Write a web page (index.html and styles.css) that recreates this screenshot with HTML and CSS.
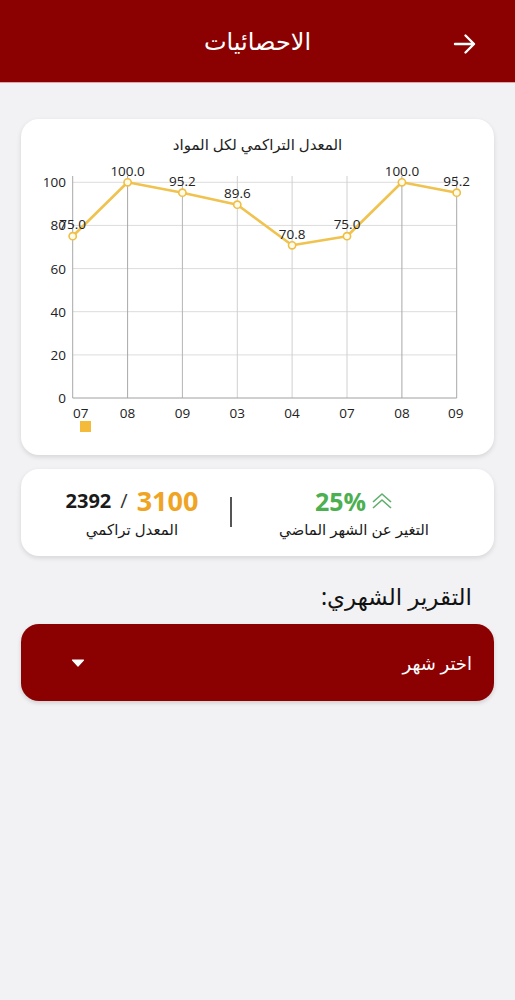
FILE: index.html
```html
<!DOCTYPE html>
<html lang="ar">
<head>
<meta charset="utf-8">
<title>الاحصائيات</title>
<link rel="stylesheet" href="styles.css">
</head>
<body>
<header class="topbar">
  <h1 class="topbar-title">الاحصائيات</h1>
  <svg class="back" width="24" height="22" viewBox="0 0 24 22"><path d="M2 11H21M12.5 2.5L21 11L12.5 19.5" fill="none" stroke="#fff" stroke-width="2.4" stroke-linecap="round" stroke-linejoin="round"/></svg>
</header>

<main class="content">
  <section class="card chart-card">
    <div class="chart-title">المعدل التراكمي لكل المواد</div>
    <svg class="chart" width="473" height="290" viewBox="0 0 473 290">
      <g stroke="#dcdcdc" stroke-width="1">
        <line x1="52.7" y1="29.3" x2="436.7" y2="29.3"/>
        <line x1="52.7" y1="72.4" x2="436.7" y2="72.4"/>
        <line x1="52.7" y1="115.6" x2="436.7" y2="115.6"/>
        <line x1="52.7" y1="158.7" x2="436.7" y2="158.7"/>
        <line x1="52.7" y1="201.9" x2="436.7" y2="201.9"/>
      </g>
      <g stroke-width="1">
        <line x1="52.7" y1="23" x2="52.7" y2="245" stroke="#a8a8a8"/>
        <line x1="107.6" y1="23" x2="107.6" y2="245" stroke="#a8a8a8"/>
        <line x1="162.4" y1="23" x2="162.4" y2="245" stroke="#b4b4b4"/>
        <line x1="217.3" y1="23" x2="217.3" y2="245" stroke="#d0d0d0"/>
        <line x1="272.1" y1="23" x2="272.1" y2="245" stroke="#d0d0d0"/>
        <line x1="327" y1="23" x2="327" y2="245" stroke="#d0d0d0"/>
        <line x1="381.9" y1="23" x2="381.9" y2="245" stroke="#a8a8a8"/>
        <line x1="436.7" y1="23" x2="436.7" y2="245" stroke="#a8a8a8"/>
      </g>
      <line x1="52.7" y1="245" x2="436.7" y2="245" stroke="#a0a0a0" stroke-width="1"/>
      <g class="ylab" text-anchor="end">
        <text x="46" y="29.3">100</text>
        <text x="46" y="72.4">80</text>
        <text x="46" y="115.6">60</text>
        <text x="46" y="158.7">40</text>
        <text x="46" y="201.9">20</text>
        <text x="46" y="245">0</text>
      </g>
      <g class="xlab" text-anchor="middle">
        <text x="53" y="259.5" text-anchor="start">07</text>
        <text x="107.6" y="259.5">08</text>
        <text x="162.4" y="259.5">09</text>
        <text x="217.3" y="259.5">03</text>
        <text x="272.1" y="259.5">04</text>
        <text x="327" y="259.5">07</text>
        <text x="381.9" y="259.5">08</text>
        <text x="435.7" y="259.5">09</text>
      </g>
      <polyline points="52.7,83.2 107.6,29.3 162.4,39.7 217.3,51.7 272.1,92.3 327,83.2 381.9,29.3 436.7,39.7" fill="none" stroke="#f0c24e" stroke-width="2.6" stroke-linejoin="round"/>
      <g fill="#fffbea" stroke="#efbf45" stroke-width="1.6">
        <circle cx="52.7" cy="83.2" r="3.6"/>
        <circle cx="107.6" cy="29.3" r="3.6"/>
        <circle cx="162.4" cy="39.7" r="3.6"/>
        <circle cx="217.3" cy="51.7" r="3.6"/>
        <circle cx="272.1" cy="92.3" r="3.6"/>
        <circle cx="327" cy="83.2" r="3.6"/>
        <circle cx="381.9" cy="29.3" r="3.6"/>
        <circle cx="436.7" cy="39.7" r="3.6"/>
      </g>
      <g class="dlab" text-anchor="middle">
        <text x="52.7" y="75.5">75.0</text>
        <text x="107.6" y="22.5">100.0</text>
        <text x="162.4" y="32.5">95.2</text>
        <text x="217.3" y="44.5">89.6</text>
        <text x="272.1" y="85.5">70.8</text>
        <text x="327" y="76">75.0</text>
        <text x="381.9" y="22.5">100.0</text>
        <text x="436.7" y="32.5">95.2</text>
      </g>
      <rect x="60" y="268" width="11" height="11" fill="#f4bb3a"/>
    </svg>
  </section>

  <section class="card stats-card">
    <div class="stat stat-total">
      <div class="stat-value"><span class="num-dark">2392</span><span class="slash">/</span><span class="num-orange">3100</span></div>
      <div class="stat-label">المعدل تراكمي</div>
    </div>
    <div class="divider"></div>
    <div class="stat stat-change">
      <div class="stat-value"><span class="num-green">25%</span><svg class="chev" width="22" height="18" viewBox="0 0 22 18"><path d="M2 10L11 2L20 10M2 16L11 8L20 16" fill="none" stroke="#5fae6a" stroke-width="1.6" stroke-linejoin="round"/></svg></div>
      <div class="stat-label">التغير عن الشهر الماضي</div>
    </div>
  </section>

  <h2 class="section-title">التقرير الشهري:</h2>

  <div class="select">
    <span class="select-text">اختر شهر</span>
    <svg class="caret" width="14" height="8" viewBox="0 0 14 8"><path d="M1.5 1H12.5L7 7Z" fill="#fff" stroke="#fff" stroke-width="1.2" stroke-linejoin="round"/></svg>
  </div>
</main>
</body>
</html>
```

FILE: styles.css
```css
* { box-sizing: border-box; }

html, body {
  margin: 0;
  padding: 0;
}

body {
  width: 515px;
  min-height: 1000px;
  background: #f2f2f4;
  font-family: "Noto Sans", "DejaVu Sans", sans-serif;
  color: #1a1a1a;
  direction: rtl;
}

.topbar {
  height: 83px;
  background: #8b0000;
  display: flex;
  align-items: center;
  justify-content: center;
  position: relative;
  border-bottom: 1px solid #e5a3a3;
}

.topbar-title {
  margin: 0;
  font-size: 24px;
  font-weight: 400;
  color: #fff;
  line-height: 30px;
}

.back {
  position: absolute;
  right: 38px;
  top: 33px;
}

.content {
  padding: 0 21px;
}

.card {
  background: #fff;
  border-radius: 18px;
  box-shadow: 0 2px 5px rgba(0, 0, 0, 0.12);
}

.chart-card {
  margin-top: 36px;
  height: 336px;
  padding-top: 15px;
  direction: ltr;
}

.chart-title {
  direction: rtl;
  text-align: center;
  font-size: 15px;
  line-height: 20px;
  color: #222;
}

.chart {
  display: block;
  margin-top: -1px;
  margin-left: -1px;
}

.chart text {
  font-family: "Open Sans", "Noto Sans", sans-serif;
  font-size: 13.5px;
  fill: #222;
}

.ylab text {
  dominant-baseline: central;
}

.xlab text {
  dominant-baseline: central;
}

.stats-card {
  margin-top: 14px;
  height: 87px;
  display: flex;
  align-items: center;
  direction: ltr;
  padding-left: 16px;
}

.stat {
  display: flex;
  flex-direction: column;
  align-items: center;
  gap: 3px;
}

.stat-total {
  width: 190px;
}

.stat-change {
  width: 244px;
}

.divider {
  width: 2px;
  height: 30px;
  background: #555;
  margin-left: 3px;
  margin-top: -2px;
}

.stat-value {
  display: flex;
  align-items: center;
  font-family: "Open Sans", "Noto Sans", sans-serif;
  font-weight: 700;
  font-size: 24px;
  line-height: 30px;
}

.num-dark { color: #1a1a1a; font-size: 20px; }
.slash { color: #333; font-weight: 400; font-size: 20px; margin: 0 9px; }
.num-orange { color: #f0a424; font-size: 27px; }
.num-green { color: #4caf50; font-size: 25px; }

.chev { margin-left: 5px; }

.stat-label {
  direction: rtl;
  font-size: 15px;
  line-height: 20px;
  color: #1a1a1a;
}

.section-title {
  margin: 25px 22px 0 0;
  font-size: 23px;
  font-weight: 400;
  line-height: 30px;
  color: #111;
}

.select {
  margin-top: 13px;
  height: 77px;
  background: #8b0000;
  border-radius: 18px;
  display: flex;
  align-items: center;
  justify-content: space-between;
  padding: 0 22px 0 50px;
  box-shadow: 0 2px 4px rgba(0, 0, 0, 0.15);
}

.select-text {
  color: #fff;
  font-size: 18px;
  line-height: 24px;
}

.caret { display: block; }
```
